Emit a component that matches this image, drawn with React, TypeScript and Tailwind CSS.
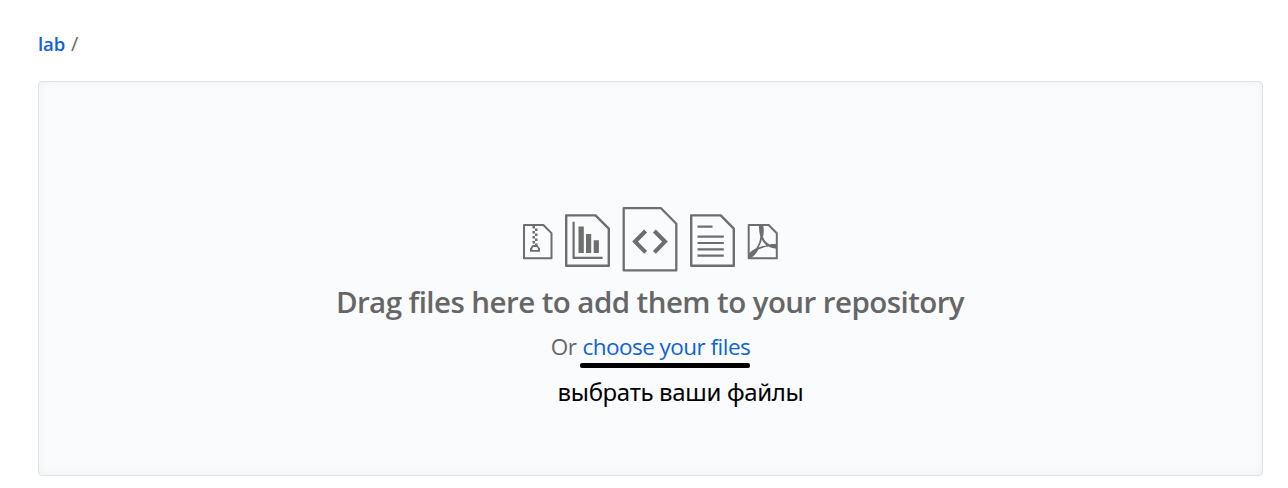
import React from "react";

const stroke = "#6e6e6e";

function ZipIcon() {
  return (
    <svg width="31" height="66" viewBox="522 206 31 66" fill="none" stroke={stroke}>
      <path d="M524 225h19.4l8.1 8.1V258.300H524z" strokeWidth="2" strokeLinejoin="round" />
      <g fill={stroke} stroke="none">
        <path d="M532.500 226h2.500v2.500h-2.500zM535 228.500h2.500v2.500H535zM532.500 231h2.500v2.500h-2.500zM535 233.500h2.500v2.500H535zM532.500 236h2.500v2.500h-2.500zM535 238.500h2.500v2.500H535zM532.500 241h2.500v2.500h-2.500zM535 243.500h2.500v2H535z" />
        <path fillRule="evenodd" d="M532.500 245h4.800l2.700 3.500v3.300h-10v-3.300zM532.300 248.300v1.800h5.600v-1.800l-1-1.300h-3.600z" />
      </g>
    </svg>
  );
}

function ChartIcon() {
  return (
    <svg width="47" height="66" viewBox="564 206 47 66" fill="none" stroke={stroke}>
      <path d="M566.200 215.400h29.300l13.300 13.300v37.100h-42.600z" strokeWidth="2.400" strokeLinejoin="round" />
      <path d="M573.600 221.700v36.200h29" strokeWidth="2.200" />
      <path d="M578.500 226.500h5.300v26.500h-5.300zM586 234h5.200v19H586zM593.700 240.300h5.200V253h-5.200z" fill={stroke} stroke="none" />
    </svg>
  );
}

function CodeIcon() {
  return (
    <svg width="56" height="66" viewBox="622 206 56 66" fill="none" stroke={stroke}>
      <path d="M623.700 208.200h37.300l15.300 15.500v46.700h-52.600z" strokeWidth="2.300" strokeLinejoin="round" />
      <path d="M645.600 231l-10.500 10.600 10.500 10.800M654.400 231l10.500 10.600-10.500 10.800" strokeWidth="4.200" />
    </svg>
  );
}

function TextIcon() {
  return (
    <svg width="47" height="66" viewBox="689 206 47 66" fill="none" stroke={stroke}>
      <path d="M691.200 215.400h29.500l13.100 13.300v37.100h-42.600z" strokeWidth="2.400" strokeLinejoin="round" />
      <path d="M697.500 226.600h15M697.500 236.600h26.300M697.500 243h26.300M697.500 249.300h26.300M697.500 255.700h26.300" strokeWidth="2.200" />
    </svg>
  );
}

function PdfIcon() {
  return (
    <svg width="31" height="66" viewBox="747 206 31 66" fill="none" stroke={stroke}>
      <path d="M748.700 225h20l8.100 8.300v25h-28.100z" strokeWidth="2" strokeLinejoin="round" />
      <path fill={stroke} stroke="none" fillRule="evenodd" d="M759 225.500h4.300c.8 4 .5 8-.3 11.500 1.600 4 4 6.300 6.800 7.400 2.600-.4 5-.4 7.100.1v4.300c-3-.1-5.700-.9-8.300-2.200-3.700.4-7 1.400-10.200 2.900-2.800 4.800-5.700 8.500-9.600 8.900v-4.600c2-2.300 4.700-4.300 7.600-5.700 2.400-4 3.600-7.600 3.900-11.400-1-3.800-1.500-7.500-1.300-11.200zM761.800 239.400c-.7 3-1.900 5.700-3.300 8.100 2.700-1 5.300-1.700 8-2.100-2-1.600-3.600-3.600-4.700-6z" />
    </svg>
  );
}

export default function App() {
  return (
    <main className="h-[488px] w-[1288px] bg-white pl-[38px] pt-[30px] font-['Open_Sans','Noto_Sans',sans-serif] text-[#666666]">
      <nav className="flex h-[51px] items-start gap-[6px] text-[18.500px] leading-[28px]">
        <a href="#" className="font-semibold tracking-[-0.1px] text-[#0f62d6]">lab</a>
        <span className="text-[20px]">/</span>
      </nav>
      <section className="flex h-[395px] w-[1225px] flex-col items-center rounded-[4px] border border-[#dfe2e6] bg-[#fafbfd] pt-[124px] shadow-[inset_0_0_10px_rgba(27,31,35,0.05)]">
        <div className="flex h-[66px] w-[257px] gap-[11px]">
          <ZipIcon />
          <ChartIcon />
          <CodeIcon />
          <TextIcon />
          <PdfIcon />
        </div>
        <h1 className="mt-[10px] whitespace-nowrap pr-[1px] text-[29.500px] font-semibold leading-[40px] tracking-[-0.560px]">
          Drag files here to add them to your repository
        </h1>
        <p className="mt-[10px] flex gap-[6px] whitespace-nowrap text-[22.500px] leading-[30px] tracking-[-0.530px]">
          <span>Or</span>
          <a href="#" className="relative text-[#0f62d6]">
            choose your files
            <span className="absolute left-[-2px] top-[31px] h-[5px] w-[170px] rounded-[2px] bg-black" />
          </a>
        </p>
        <p className="ml-[60px] mt-[14px] whitespace-nowrap font-['Noto_Sans'] text-[24px] leading-[32px] tracking-[-0.340px] text-black">выбрать ваши файлы</p>
      </section>
    </main>
  );
}
